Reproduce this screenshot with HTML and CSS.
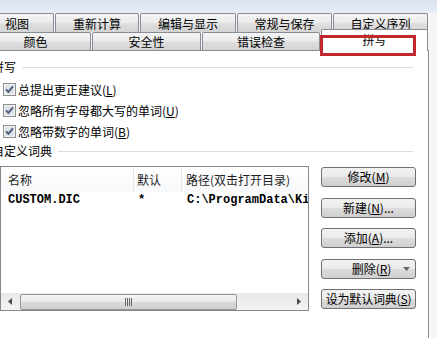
FILE: index.html
```html
<!DOCTYPE html>
<html>
<head>
<meta charset="utf-8">
<link rel="stylesheet" href="styles.css">
</head>
<body>
<div class="win">
  <div class="topband"></div>
  <div class="tabs">
    <div class="tabrow r1">
      <div class="tab w1">视图</div>
      <div class="tab w2">重新计算</div>
      <div class="tab w3">编辑与显示</div>
      <div class="tab w4">常规与保存</div>
      <div class="tab w5">自定义序列</div>
    </div>
    <div class="tabrow r2">
      <div class="tab v1">颜色</div>
      <div class="tab v2">安全性</div>
      <div class="tab v3">错误检查</div>
      <div class="tab sel">拼写</div>
    </div>
  </div>
  <div class="panel">
    <div class="group"><span>拼写</span><i></i></div>
    <div class="chk first">
      <svg width="13" height="13" viewBox="0 0 13 13"><rect x="0.5" y="0.5" width="12" height="12" fill="#f4f4f4" stroke="#8e8f8f"/><rect x="2" y="2" width="9" height="9" fill="#dde1e8"/><path d="M3 6.3 L5.4 8.8 L10 3.4" fill="none" stroke="#4b5a7c" stroke-width="1.9"/></svg>
      <span>总提出更正建议(<u>L</u>)</span>
    </div>
    <div class="chk">
      <svg width="13" height="13" viewBox="0 0 13 13"><rect x="0.5" y="0.5" width="12" height="12" fill="#f4f4f4" stroke="#8e8f8f"/><rect x="2" y="2" width="9" height="9" fill="#dde1e8"/><path d="M3 6.3 L5.4 8.8 L10 3.4" fill="none" stroke="#4b5a7c" stroke-width="1.9"/></svg>
      <span>忽略所有字母都大写的单词(<u>U</u>)</span>
    </div>
    <div class="chk">
      <svg width="13" height="13" viewBox="0 0 13 13"><rect x="0.5" y="0.5" width="12" height="12" fill="#f4f4f4" stroke="#8e8f8f"/><rect x="2" y="2" width="9" height="9" fill="#dde1e8"/><path d="M3 6.3 L5.4 8.8 L10 3.4" fill="none" stroke="#4b5a7c" stroke-width="1.9"/></svg>
      <span>忽略带数字的单词(<u>B</u>)</span>
    </div>
    <div class="group g2"><span>自定义词典</span><i></i></div>
    <div class="dictrow">
      <div class="listbox">
        <div class="lhead">
          <div class="c1">名称</div>
          <div class="c2">默认</div>
          <div class="c3">路径(双击打开目录)</div>
        </div>
        <div class="lrow">
          <div class="c1">CUSTOM.DIC</div>
          <div class="c2">*</div>
          <div class="c3">C:\ProgramData\Ki</div>
        </div>
        <div class="hscroll">
          <div class="sarrow"><svg width="17" height="17" viewBox="0 0 17 17"><path d="M7 8.5 L11 5 L11 12 Z" fill="#4a4a4a"/></svg></div>
          <div class="thumb"><svg width="9" height="8" viewBox="0 0 9 8"><path d="M1.5 0 V8 M3.5 0 V8 M5.5 0 V8 M7.5 0 V8" stroke="#666" stroke-width="1"/></svg></div>
          <div class="track"></div>
          <div class="sarrow"><svg width="17" height="17" viewBox="0 0 17 17"><path d="M10 8.5 L6 5 L6 12 Z" fill="#4a4a4a"/></svg></div>
        </div>
      </div>
      <div class="btns">
        <div class="btn">修改(<u>M</u>)</div>
        <div class="btn">新建(<u>N</u>)...</div>
        <div class="btn">添加(<u>A</u>)...</div>
        <div class="btn split"><span class="bl">删除(<u>R</u>)</span><svg width="7" height="4" viewBox="0 0 7 4"><path d="M0 0 H7 L3.5 4 Z" fill="#666"/></svg></div>
        <div class="btn wide">设为默认词典(<u>S</u>)</div>
      </div>
    </div>
  </div>
  <div class="redmark"></div>
</div>
</body>
</html>
```

FILE: styles.css
```css
html, body {
  margin: 0;
  padding: 0;
}
body {
  font-family: "Noto Sans CJK SC", "Noto Sans", sans-serif;
  font-size: 12px;
  color: #000;
  overflow: hidden;
}
.win {
  position: relative;
  width: 437px;
  height: 338px;
  overflow: hidden;
  background: #f6f6f6;
}
.topband {
  height: 13px;
  background: linear-gradient(to bottom, #d9e3ee, #e6edf5);
}
.tabs {
  margin-left: -20px;
  width: 448px;
}
.tabrow {
  display: flex;
  gap: 1px;
}
.r1 { height: 19px; }
.r2 { height: 18px; }
.tab {
  box-sizing: border-box;
  border: 1px solid #898c95;
  border-bottom: none;
  border-radius: 2px 2px 0 0;
  background: linear-gradient(to bottom, #f4f4f4 0%, #ececec 45%, #dedede 55%, #d4d4d4 100%);
  display: flex;
  align-items: center;
  justify-content: center;
  line-height: 14px;
  padding-top: 2px;
  white-space: nowrap;
}
.r1 .tab { height: 19px; }
.r2 .tab { height: 18px; padding-top: 1px; }
.w1 { width: 74px; }
.w2 { width: 84px; }
.w3 { width: 96px; }
.w4 { width: 95px; }
.w5 { width: 95px; }
.v1 { width: 111px; }
.v2 { width: 109px; }
.v3 { width: 118px; }
.r2 .tab.sel {
  width: 107px;
  height: 22px;
  margin-top: -3px;
  background: #fff;
  position: relative;
  z-index: 2;
  align-items: flex-start;
  padding-top: 3px;
}
.panel {
  box-sizing: border-box;
  margin-left: -20px;
  padding-left: 20px;
  width: 449px;
  height: 288px;
  border-top: 1px solid #898c95;
  border-right: 1px solid #898c95;
  background: #fff;
}
.group {
  display: flex;
  align-items: center;
  height: 16px;
  margin-left: -8px;
  margin-top: 8px;
  margin-right: 15px;
}
.group span {
  line-height: 16px;
  white-space: nowrap;
}
.group i {
  flex: 1;
  height: 1px;
  margin-left: 6px;
  background: #d5dfe5;
}
.g2 { margin-top: 1px; }
.chk {
  display: flex;
  align-items: center;
  height: 21px;
  padding-left: 3px;
  gap: 2px;
  white-space: nowrap;
}
.chk svg { flex: none; }
.chk.first { margin-top: 4px; }
.dictrow {
  display: flex;
  margin-top: 7px;
}
.listbox {
  box-sizing: border-box;
  width: 309px;
  height: 145px;
  border: 1px solid #828790;
  display: flex;
  flex-direction: column;
  overflow: hidden;
}
.lhead {
  display: flex;
  height: 25px;
  flex: none;
  background: linear-gradient(to bottom, #ffffff, #f7f8f9);
  color: #1e1e1e;
}
.lhead > div {
  box-sizing: border-box;
  display: flex;
  align-items: center;
  white-space: nowrap;
}
.lhead .c1 { width: 133px; padding-left: 7px; border-right: 1px solid #e3e6ea; }
.lhead .c2 { width: 48px; padding-left: 3px; border-right: 1px solid #e3e6ea; }
.lhead .c3 { flex: 1; padding-left: 4px; }
.lrow {
  display: flex;
  height: 16px;
  flex: none;
  font-family: "Liberation Mono", "DejaVu Sans Mono", monospace;
  font-weight: bold;
  font-size: 12px;
  line-height: 16px;
  white-space: nowrap;
}
.lrow .c1 { width: 133px; padding-left: 7px; box-sizing: border-box; }
.lrow .c2 { width: 48px; padding-left: 4px; box-sizing: border-box; }
.lrow .c3 { flex: 1; min-width: 0; padding-left: 5px; overflow: hidden; }
.hscroll {
  margin-top: auto;
  height: 17px;
  flex: none;
  display: flex;
  align-items: center;
  background: linear-gradient(to bottom, #e8e8e8, #f3f3f3);
}
.sarrow {
  width: 17px;
  height: 17px;
  flex: none;
}
.sarrow svg { display: block; }
.thumb {
  box-sizing: border-box;
  margin-left: 2px;
  width: 217px;
  height: 16px;
  border: 1px solid #979797;
  border-radius: 2px;
  background: linear-gradient(to bottom, #f4f4f4 0%, #e8e8e8 50%, #d9d9d9 51%, #cfcfcf 100%);
  display: flex;
  align-items: center;
  justify-content: center;
}
.track { flex: 1; }
.btns {
  display: flex;
  flex-direction: column;
  gap: 10.5px;
  margin-left: 12px;
  margin-top: 1px;
  width: 95px;
}
.btn {
  box-sizing: border-box;
  height: 20px;
  border: 1px solid #707070;
  border-radius: 3px;
  background: linear-gradient(to bottom, #f2f2f2 0%, #ebebeb 50%, #dddddd 51%, #cfcfcf 100%);
  display: flex;
  align-items: center;
  justify-content: center;
  white-space: nowrap;
  line-height: 14px;
}
.btn.split {
  justify-content: space-between;
  padding-left: 18px;
  padding-right: 5px;
}
.btn.split .bl { flex: 1; text-align: center; }
.btn.wide { letter-spacing: -0.2px; }
.redmark {
  position: absolute;
  left: 320px;
  top: 35px;
  width: 96px;
  height: 21px;
  box-sizing: border-box;
  border: 3px solid #c1272d;
  z-index: 5;
}
```
